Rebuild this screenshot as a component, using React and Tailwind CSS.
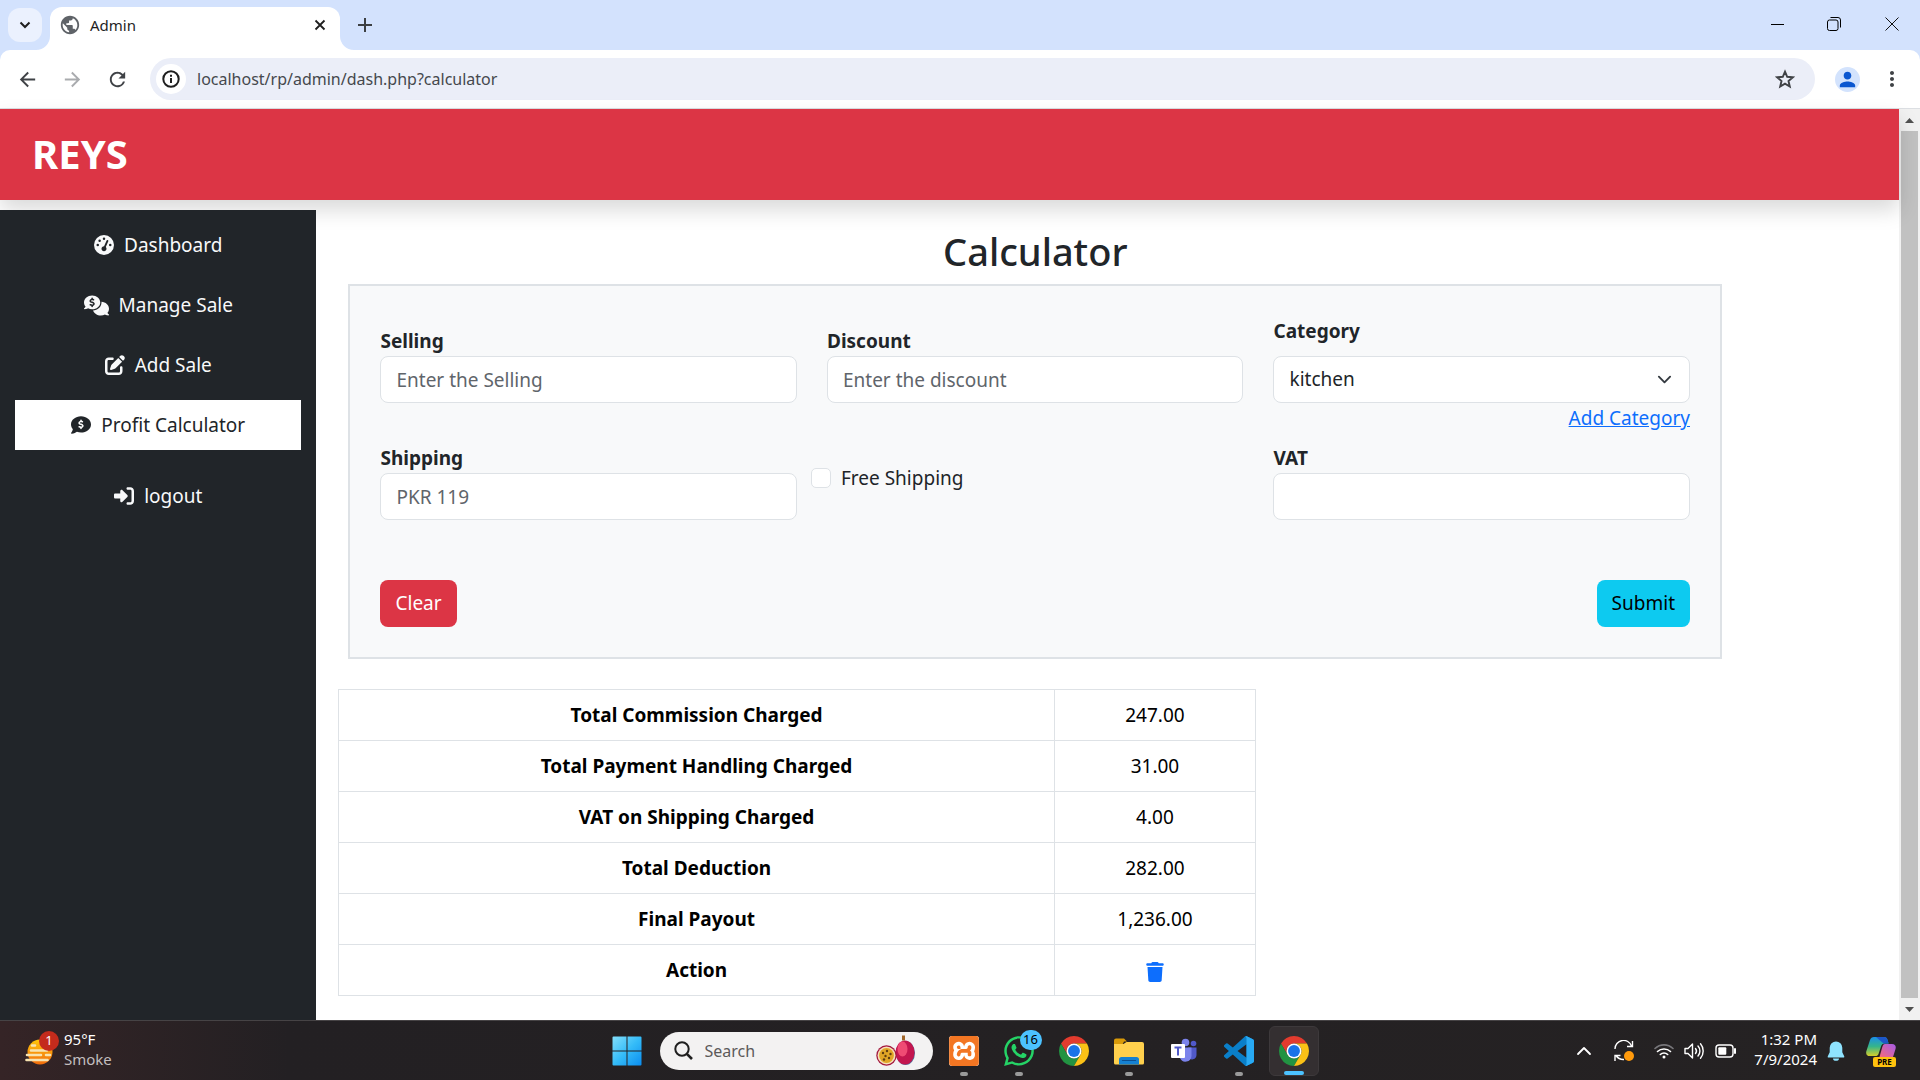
import { FaGaugeHigh, FaCommentsDollar, FaPenToSquare, FaCommentDollar, FaRightToBracket, FaTrash, FaWhatsapp } from "react-icons/fa6";
import { MdArrowBack, MdArrowForward, MdRefresh, MdPerson, MdMoreVert, MdPublic } from "react-icons/md";
import { SiXampp } from "react-icons/si";

const NAV = [
  { label: "Dashboard", Icon: FaGaugeHigh, icon: "h-5 w-5", item: "text-[#f8f9fa]" },
  { label: "Manage Sale", Icon: FaCommentsDollar, icon: "h-[25px] w-[25px]", item: "text-[#f8f9fa]" },
  { label: "Add Sale", Icon: FaPenToSquare, icon: "h-5 w-5", item: "text-[#f8f9fa]" },
  { label: "Profit Calculator", Icon: FaCommentDollar, icon: "h-5 w-5", item: "bg-white text-[#212529]" },
  { label: "logout", Icon: FaRightToBracket, icon: "h-5 w-5", item: "mt-[11px] text-[#f8f9fa]" },
];

const RESULTS = [
  ["Total Commission Charged", "247.00"],
  ["Total Payment Handling Charged", "31.00"],
  ["VAT on Shipping Charged", "4.00"],
  ["Total Deduction", "282.00"],
  ["Final Payout", "1,236.00"],
];

const INPUT = "h-[47px] w-full rounded-lg border border-[#dee2e6] bg-white px-[15px] text-[#212529] placeholder:text-[#5f656b]";

function TabFlare({ className }) {
  return (
    <svg className={className} viewBox="0 0 14 14" fill="#fff" aria-hidden="true">
      <path d="M14 0V14H0A14 14 0 0 0 14 0Z" />
    </svg>
  );
}

function BrowserFrame() {
  return (
    <div className="bg-[#d3e2fd] text-[#1f1f1f]">
      <div className="flex h-[50px] items-center pl-2">
        <button aria-label="Search tabs" className="flex h-[34px] w-[34px] items-center justify-center rounded-xl bg-[#ebf1fe]">
          <svg className="h-3 w-3" viewBox="0 0 12 12" fill="none" stroke="#1f1f1f" strokeWidth="2"><path d="M1.500 3.500 6 8l4.500-4.500" /></svg>
        </button>
        <div className="relative ml-2 mt-[7px] flex h-[43px] w-[290px] items-center rounded-t-xl bg-white pb-[7px] pl-[9px] pr-[14px]">
          <TabFlare className="absolute -left-[14px] bottom-0 h-[14px] w-[14px]" />
          <TabFlare className="absolute -right-[14px] bottom-0 h-[14px] w-[14px] -scale-x-100" />
          <MdPublic className="h-[22px] w-[22px] text-[#5f6368]" />
          <span className="ml-[9px] flex-1 text-[15px] leading-5">Admin</span>
          <button aria-label="Close tab">
            <svg className="h-3 w-3" viewBox="0 0 12 12" stroke="#1f1f1f" strokeWidth="1.800"><path d="m1.500 1.500 9 9m0-9-9 9" /></svg>
          </button>
        </div>
        <button aria-label="New tab" className="ml-[18px]">
          <svg className="h-[14px] w-[14px]" viewBox="0 0 14 14" stroke="#3c3f43" strokeWidth="2"><path d="M7 0v14M0 7h14" /></svg>
        </button>
        <div className="ml-auto flex items-center pb-[2px]">
          <button aria-label="Minimize" className="flex w-[56px] justify-center">
            <svg className="h-[13px] w-[13px]" viewBox="0 0 13 13" stroke="#000"><path d="M0 6.500h13" /></svg>
          </button>
          <button aria-label="Restore" className="flex w-[58px] justify-center">
            <svg className="h-[14px] w-[14px]" viewBox="0 0 14 14" fill="none" stroke="#000"><rect x=".5" y="3" width="10.500" height="10.500" rx="2" /><path d="M3.500.5H11A2.500 2.500 0 0 1 13.500 3v7.500" /></svg>
          </button>
          <button aria-label="Close" className="flex w-[57px] justify-center">
            <svg className="h-[14px] w-[14px]" viewBox="0 0 14 14" stroke="#111"><path d="m.5.5 13 13m0-13-13 13" /></svg>
          </button>
        </div>
      </div>
      <div className="flex h-[59px] items-center rounded-t-[10px] border-b border-[#dcdfe3] bg-white pl-[16px] pr-[16px] text-[#3f4246]">
        <button aria-label="Back"><MdArrowBack className="h-[23px] w-[23px]" /></button>
        <button aria-label="Forward" className="ml-[22px] text-[#a9abae]"><MdArrowForward className="h-[23px] w-[23px]" /></button>
        <button aria-label="Reload" className="ml-[22px]"><MdRefresh className="h-[23px] w-[23px]" /></button>
        <div className="ml-[21px] flex h-[42px] flex-1 items-center rounded-full bg-[#ebeef8] pl-[6px] pr-[20px]">
          <button aria-label="Site information" className="flex h-[30px] w-[30px] items-center justify-center rounded-full bg-white text-[#1f1f1f]">
            <svg className="h-[18px] w-[18px]" viewBox="0 0 18 18" fill="none" stroke="currentColor" strokeWidth="2"><circle cx="9" cy="9" r="7.700" /><path d="M9 8v5M9 4.800v2" /></svg>
          </button>
          <input aria-label="Address" defaultValue="localhost/rp/admin/dash.php?calculator" className="ml-[11px] flex-1 bg-transparent text-[16px] text-[#45484d]" />
          <button aria-label="Bookmark">
            <svg className="h-5 w-5" viewBox="0 0 20 20" fill="none" stroke="currentColor" strokeWidth="1.900"><path d="m10 2.600 2.200 5.200 5.600.5-4.300 3.700 1.300 5.500L10 14.600l-4.800 2.900L6.500 12 2.200 8.300l5.600-.5z" /></svg>
          </button>
        </div>
        <button aria-label="Profile" className="ml-[20px] flex h-[25px] w-[25px] items-center justify-center rounded-full bg-[#d3e3fd] text-[#0b57d0]">
          <MdPerson className="h-[23px] w-[23px]" />
        </button>
        <button aria-label="Menu" className="ml-[20px]"><MdMoreVert className="h-6 w-6" /></button>
      </div>
    </div>
  );
}

function ScrollBar() {
  return (
    <div className="flex w-[21px] shrink-0 flex-col items-center bg-[#f1f1f1]" aria-hidden="true">
      <svg className="h-[22px] w-[21px]" viewBox="0 0 21 22" fill="#505050"><path d="M6 14h9l-4.500-5z" /></svg>
      <div className="w-[17px] flex-1 bg-[#c1c1c1]" />
      <svg className="h-[22px] w-[21px]" viewBox="0 0 21 22" fill="#505050"><path d="M6 9h9l-4.500 5z" /></svg>
    </div>
  );
}

function Field({ id, label, placeholder, className }) {
  return (
    <div className={className}>
      <label htmlFor={id} className="block font-bold leading-[30px]">{label}</label>
      <input id={id} type="text" placeholder={placeholder} className={INPUT} />
    </div>
  );
}

function CalculatorForm() {
  return (
    <form className="border-2 border-[#dee2e6] bg-[#f8f9fa] p-[30px]" onSubmit={(e) => e.preventDefault()}>
      <div className="grid grid-cols-3 gap-x-[30px] gap-y-[10px]">
        <Field id="selling" label="Selling" placeholder="Enter the Selling" className="pt-[10px]" />
        <Field id="discount" label="Discount" placeholder="Enter the discount" className="pt-[10px]" />
        <div>
          <label htmlFor="category" className="mb-[10px] block font-bold leading-[30px]">Category</label>
          <div className="relative">
            <select id="category" defaultValue="kitchen" className="h-[47px] w-full appearance-none rounded-lg border border-[#dee2e6] bg-white px-[15px] text-[#212529]">
              <option>kitchen</option>
            </select>
            <svg className="pointer-events-none absolute right-[18px] top-4 h-[15px] w-[15px]" viewBox="0 0 16 16" fill="none" stroke="#343a40" strokeWidth="2" strokeLinecap="round" strokeLinejoin="round"><path d="m2 5 6 6 6-6" /></svg>
          </div>
          <div className="text-right leading-[30px]">
            <a href="#add-category" className="text-[#0d6efd] underline">Add Category</a>
          </div>
        </div>
        <Field id="shipping" label="Shipping" placeholder="PKR 119" />
        <div className="-ml-4 flex items-center self-start pt-5 leading-[30px]">
          <input id="free-shipping" type="checkbox" className="h-5 w-5 appearance-none rounded-[5px] border border-[#dee2e6] bg-white" />
          <label htmlFor="free-shipping" className="pl-[10px]">Free Shipping</label>
        </div>
        <Field id="vat" label="VAT" />
      </div>
      <div className="mt-[60px] flex justify-between">
        <button type="reset" className="h-[47px] rounded-lg bg-[#dc3545] px-[15px] text-white">Clear</button>
        <button type="submit" className="h-[47px] rounded-lg bg-[#0dcaf0] px-[15px] text-black">Submit</button>
      </div>
    </form>
  );
}

function ResultsTable() {
  return (
    <table className="ml-[22px] mt-[30px] w-[58%] border-collapse text-center text-black">
      <tbody>
        {RESULTS.map(([name, value]) => (
          <tr key={name}>
            <th scope="row" className="h-[51px] w-[78%] border border-[#dee2e6] font-bold">{name}</th>
            <td className="border border-[#dee2e6]">{value}</td>
          </tr>
        ))}
        <tr>
          <th scope="row" className="h-[51px] border border-[#dee2e6] font-bold">Action</th>
          <td className="border border-[#dee2e6]">
            <button aria-label="Delete" className="align-middle text-[#0d6efd]"><FaTrash className="h-5 w-5" /></button>
          </td>
        </tr>
      </tbody>
    </table>
  );
}

function Page() {
  return (
    <div className="flex flex-1">
      <div className="flex flex-1 flex-col bg-white text-[19px] text-[#212529]">
        <header className="relative flex h-[91px] items-center bg-[#dc3545] px-8 pb-[2px] shadow-[0_10px_20px_rgba(0,0,0,0.15)]">
          <span className="text-[40px] font-bold leading-[60px] text-white">REYS</span>
        </header>
        <div className="mt-[10px] flex flex-1">
          <nav className="relative flex w-1/6 flex-col gap-[10px] bg-[#212529] px-[15px] pt-[10px]">
            {NAV.map(({ label, Icon, icon, item }) => (
              <a key={label} href={"#" + label} className={"flex h-[50px] items-center justify-center gap-[10px] " + item}>
                <Icon className={icon} />
                {label}
              </a>
            ))}
          </nav>
          <main className="flex-1">
            <div className="ml-8 mr-[177px] pt-[17px]">
              <h1 className="mb-[9px] text-center text-[38px] font-medium leading-[48px]">Calculator</h1>
              <CalculatorForm />
            </div>
            <ResultsTable />
          </main>
        </div>
      </div>
      <ScrollBar />
    </div>
  );
}

function ChromeIcon() {
  return (
    <svg className="h-[30px] w-[30px]" viewBox="0 0 48 48" aria-hidden="true">
      <path d="M24 12h20.785A24 24 0 0 0 3.217 12L13.608 30A12 12 0 0 1 24 12z" fill="#e33b2e" />
      <path d="M13.609 30 3.218 12A24 24 0 0 0 24 48l10.391-18a12 12 0 0 1-20.782 0z" fill="#229342" />
      <path d="M34.391 30 24 48a24 24 0 0 0 20.783-36H24a12 12 0 0 1 10.391 18z" fill="#fbc116" />
      <circle cx="24" cy="24" r="12" fill="#fff" />
      <circle cx="24" cy="24" r="9.500" fill="#1a73e8" />
    </svg>
  );
}

function FolderIcon() {
  return (
    <svg className="h-[30px] w-[30px]" viewBox="0 0 30 30" aria-hidden="true">
      <path d="M0 4.500A2 2 0 0 1 2 2.500h8l3 3h-3l-2 4H0z" fill="#d99a08" />
      <path d="M0 8h9.500l3-2H28a2 2 0 0 1 2 2v19a1.500 1.500 0 0 1-1.500 1.500h-27A1.500 1.500 0 0 1 0 27z" fill="#ffd04d" />
      <path d="M5 28.500V23.500a2.500 2.500 0 0 1 2.500-2.500h15a2.500 2.500 0 0 1 2.500 2.500v5z" fill="#1581d2" />
      <path d="M8.500 24.500h13" stroke="#0b4f91" strokeWidth="1.200" strokeLinecap="round" />
    </svg>
  );
}

function TeamsIcon() {
  return (
    <svg className="h-[30px] w-[30px]" viewBox="0 0 30 30" aria-hidden="true">
      <circle cx="24.500" cy="7.500" r="2.800" fill="#5059c9" />
      <path d="M19 11.500h8.500v7.500a4.500 4.500 0 0 1-8.500 2z" fill="#5059c9" />
      <circle cx="16.500" cy="6.500" r="3.800" fill="#7b83eb" />
      <path d="M11 11.500h11.500v8.500a6 6 0 0 1-11.500 2z" fill="#7b83eb" />
      <rect x="2" y="8" width="14" height="14" rx="1" fill="#fff" />
      <path d="M5.500 11.500h7M9 11.500v8" stroke="#5059c9" strokeWidth="2" />
    </svg>
  );
}

function VsCodeIcon() {
  return (
    <svg className="h-[30px] w-[30px]" viewBox="0 0 24 24" aria-hidden="true">
      <path d="M23.150 2.587 18.210.21a1.494 1.494 0 0 0-1.705.29l-9.460 8.630-4.120-3.128a1 1 0 0 0-1.276.057L.327 7.261A1 1 0 0 0 .326 8.740L3.899 12 .326 15.260a1 1 0 0 0 .001 1.479L1.650 17.940a1 1 0 0 0 1.276.057l4.120-3.128 9.460 8.630a1.492 1.492 0 0 0 1.704.29l4.942-2.377A1.500 1.500 0 0 0 24 20.060V3.939a1.500 1.500 0 0 0-.850-1.352zm-5.146 14.861L10.826 12l7.178-5.448z" fill="#0a7fc9" />
      <path d="M18.200.2 23.150 2.600A1.500 1.500 0 0 1 24 3.940v16.120a1.500 1.500 0 0 1-.85 1.350L18.200 23.800l-.9.100.7-1.400V1.600L17.300.1z" fill="#28aaf4" />
    </svg>
  );
}

function XamppIcon() {
  return (
    <span className="flex h-[30px] w-[30px] items-center justify-center rounded-[3px] bg-white">
      <SiXampp className="h-[30px] w-[30px] text-[#f37623]" />
    </span>
  );
}

function WhatsAppIcon() {
  return (
    <span className="relative">
      <FaWhatsapp className="h-[34px] w-[34px] text-[#25d366]" />
      <span className="absolute -right-[6px] -top-[4px] flex h-5 w-[22px] items-center justify-center rounded-full bg-[#4cc2ff] text-[13px] text-black">16</span>
    </span>
  );
}

function FruitIcon() {
  return (
    <svg className="h-[32px] w-[40px]" viewBox="0 0 40 32" aria-hidden="true">
      <ellipse cx="29.500" cy="18" rx="9.500" ry="12" fill="#4f6f9c" />
      <ellipse cx="29" cy="17.500" rx="9.500" ry="12" fill="#c3164f" />
      <ellipse cx="26.500" cy="14" rx="5" ry="7.500" fill="#ef4b74" />
      <path d="M27.500.5v5" stroke="#a0672a" strokeWidth="3" />
      <circle cx="10.500" cy="20.500" r="10.200" fill="#a3173f" />
      <circle cx="10.500" cy="20.500" r="9" fill="#f6dfb8" />
      <circle cx="10.500" cy="20.500" r="7.400" fill="#e0a526" />
      <g fill="#5e3c10"><circle cx="7" cy="18" r="1.200" /><circle cx="11" cy="16" r="1.200" /><circle cx="14.500" cy="19" r="1.200" /><circle cx="9.500" cy="21" r="1.200" /><circle cx="13" cy="23" r="1.200" /><circle cx="8" cy="24.500" r="1.200" /></g>
    </svg>
  );
}

const APPS = [
  { name: "XAMPP", Icon: XamppIcon, box: "", mark: "w-2 bg-[#9a9a9a]" },
  { name: "WhatsApp", Icon: WhatsAppIcon, box: "", mark: "w-2 bg-[#9a9a9a]" },
  { name: "Chrome", Icon: ChromeIcon, box: "", mark: "hidden" },
  { name: "File Explorer", Icon: FolderIcon, box: "", mark: "w-2 bg-[#9a9a9a]" },
  { name: "Teams", Icon: TeamsIcon, box: "", mark: "hidden" },
  { name: "Visual Studio Code", Icon: VsCodeIcon, box: "", mark: "w-2 bg-[#9a9a9a]" },
  { name: "Chrome, active", Icon: ChromeIcon, box: "border border-[#3d393b] bg-[#342f31]", mark: "w-5 bg-[#4cc2ff]" },
];

function SmokeIcon() {
  return (
    <span className="relative h-[28px] w-[28px]">
      <svg className="h-[28px] w-[28px]" viewBox="0 0 28 28" aria-hidden="true">
        <defs><linearGradient id="sun" x1="0" y1="0" x2="0" y2="1"><stop offset="0" stopColor="#ffc60a" /><stop offset="1" stopColor="#f26c0c" /></linearGradient></defs>
        <circle cx="15" cy="15" r="12.500" fill="url(#sun)" />
        <g stroke="#f7e3b0" strokeWidth="2.600" strokeLinecap="round"><path d="M7 8.500h3M6 13.500h16M2 18h14M21 18h4M1.500 23h21" /></g>
      </svg>
      <span className="absolute -right-[6px] -top-[6px] flex h-5 w-5 items-center justify-center rounded-full bg-[#c42b1c] text-[13px] text-white">1</span>
    </span>
  );
}

function TrayIcons() {
  return (
    <>
      <svg className="h-[14px] w-[16px]" viewBox="0 0 16 14" fill="none" stroke="#fff" strokeWidth="1.800" strokeLinecap="round" strokeLinejoin="round"><path d="m2 10 6-6 6 6" /></svg>
      <svg className="ml-[21px] h-[22px] w-[22px]" viewBox="0 0 22 22" fill="none" stroke="#fff" strokeWidth="1.400"><path d="M2 9A8.500 8.500 0 0 1 18.500 6M19.500 1v5.500H14M11 19.500A9 9 0 0 1 3 15.500M2 21v-5.500h5.500" /><circle cx="16" cy="16" r="5" fill="#ff9a0c" stroke="none" /></svg>
      <svg className="ml-[19px] h-[20px] w-[20px]" viewBox="0 0 20 20" fill="none" stroke="#fff" strokeWidth="1.600" strokeLinecap="round"><path d="M1 7.500a13 13 0 0 1 18 0" stroke="#77767a" /><path d="M3.500 10.500a9.500 9.500 0 0 1 13 0M6.300 13.500a5.500 5.500 0 0 1 7.400 0" /><circle cx="10" cy="16" r="1.500" fill="#fff" stroke="none" /></svg>
      <svg className="ml-[10px] h-[20px] w-[21px]" viewBox="0 0 21 20" fill="none" stroke="#fff" strokeWidth="1.400" strokeLinecap="round" strokeLinejoin="round"><path d="M1 7.500h3L8.500 3v14L4 12.500H1zM11.500 7.500a4 4 0 0 1 0 5M14 5a7.500 7.500 0 0 1 0 10M16.500 2.800a11 11 0 0 1 0 14.400" /></svg>
      <svg className="ml-[10px] h-[20px] w-[21px]" viewBox="0 0 21 20" fill="none" stroke="#fff" strokeWidth="1.400"><rect x="1" y="4" width="17" height="12" rx="3" /><rect x="3.300" y="6.300" width="8" height="7.400" rx="1" fill="#fff" stroke="none" /><path d="M20 8v4" strokeWidth="2" strokeLinecap="round" /></svg>
    </>
  );
}

function CopilotIcon() {
  return (
    <span className="relative ml-[21px] h-[30px] w-[30px]">
      <svg className="h-[30px] w-[30px]" viewBox="0 0 30 30" aria-hidden="true">
        <defs>
          <linearGradient id="cpa" x1="0" y1="0" x2="0" y2="1"><stop offset="0" stopColor="#1a8fe8" /><stop offset=".5" stopColor="#35b58a" /><stop offset="1" stopColor="#d6cf2a" /></linearGradient>
          <linearGradient id="cpb" x1="1" y1="0" x2="0" y2="1"><stop offset="0" stopColor="#a65be8" /><stop offset="1" stopColor="#f46a7c" /></linearGradient>
        </defs>
        <path d="M8 1h10c2 0 3 1 3.600 3l1 3.500h-4c-2 0-3 1-3.600 3L12.500 18c-.6 1.500-1.500 2-3 2H4c-3 0-4.500-2-3.600-5L4 4c.7-2 2-3 4-3z" fill="url(#cpa)" />
        <path d="M10 1h8c2 0 3 1 3.600 3l1 3.500h-5z" fill="#1d57c8" />
        <path d="M19 8h7c3 0 4.300 2 3.500 5l-2.500 8H13.500l2.800-10c.6-2 1.200-3 2.700-3z" fill="url(#cpb)" />
      </svg>
      <span className="absolute -bottom-px left-[7px] flex h-[10px] w-[23px] items-center justify-center rounded-[2px] bg-[#ffc20e] text-[8px] font-bold text-black">PRE</span>
    </span>
  );
}

function Taskbar() {
  return (
    <footer className="grid h-[60px] grid-cols-[1fr_auto_1fr] items-center border-t border-[#464345] bg-linear-to-r from-[#352426] via-[#232023] via-15% to-[#252223] text-white">
      <div className="flex items-center pl-[25px]">
        <SmokeIcon />
        <div className="ml-[11px] pb-1 text-[15px] leading-5">
          <div>95°F</div>
          <div className="text-[#c3bebf]">Smoke</div>
        </div>
      </div>
      <div className="flex items-center gap-[5px]">
        <button aria-label="Start" className="flex h-[50px] w-[50px] items-center justify-center">
          <svg className="h-[30px] w-[30px]" viewBox="0 0 30 30" aria-hidden="true">
            <defs><linearGradient id="win" x1="0" y1="0" x2="1" y2="1"><stop offset="0" stopColor="#83dffb" /><stop offset=".5" stopColor="#35bcf8" /><stop offset="1" stopColor="#0a8df0" /></linearGradient></defs>
            <path d="M1.500.5H14.500V14.500H.5V1.500a1 1 0 0 1 1-1zM15.500.5h13a1 1 0 0 1 1 1V14.500h-14zM.5 15.500h14v14h-13a1 1 0 0 1-1-1zM15.500 15.500h14v13a1 1 0 0 1-1 1h-13z" fill="url(#win)" />
          </svg>
        </button>
        <div className="ml-[3px] mr-px flex h-[38px] w-[273px] items-center rounded-full bg-[#f3f2f2] pl-[14px] pr-[17px]">
          <svg className="h-[19px] w-[19px]" viewBox="0 0 19 19" fill="none" stroke="#1f1f1f" strokeWidth="2" aria-hidden="true"><circle cx="8" cy="8" r="6.700" /><path d="m12.800 12.800 5.200 5.200" strokeWidth="2.600" /></svg>
          <input aria-label="Search" placeholder="Search" className="ml-[12px] w-0 flex-1 text-[16px] placeholder:text-[#5c5a5a]" />
          <FruitIcon />
        </div>
        {APPS.map(({ name, Icon, box, mark }) => (
          <button key={name} aria-label={name} className={"relative flex h-[50px] w-[50px] items-center justify-center rounded-md " + box}>
            <Icon />
            <span className={"absolute bottom-0 h-1 rounded-full " + mark} />
          </button>
        ))}
      </div>
      <div className="flex items-center justify-end pr-[24px]">
        <TrayIcons />
        <div className="ml-[18px] pb-1 text-right text-[15px] leading-5">
          <div>1:32 PM</div>
          <div>7/9/2024</div>
        </div>
        <svg className="ml-[10px] h-[20px] w-[18px]" viewBox="0 0 18 20" fill="#8fe3ff" aria-hidden="true"><path d="M9 .5a6.300 6.300 0 0 1 6.300 6.300v4.400l1.900 4c.3.700 0 1.300-.7 1.300h-15c-.7 0-1-.6-.7-1.300l1.900-4V6.800A6.300 6.300 0 0 1 9 .5zM6 17.500h6a3 2.300 0 0 1-6 0z" /></svg>
        <CopilotIcon />
      </div>
    </footer>
  );
}

export default function App() {
  return (
    <div className="flex min-h-screen flex-col font-['Noto_Sans','Open_Sans',sans-serif]">
      <BrowserFrame />
      <Page />
      <Taskbar />
    </div>
  );
}
